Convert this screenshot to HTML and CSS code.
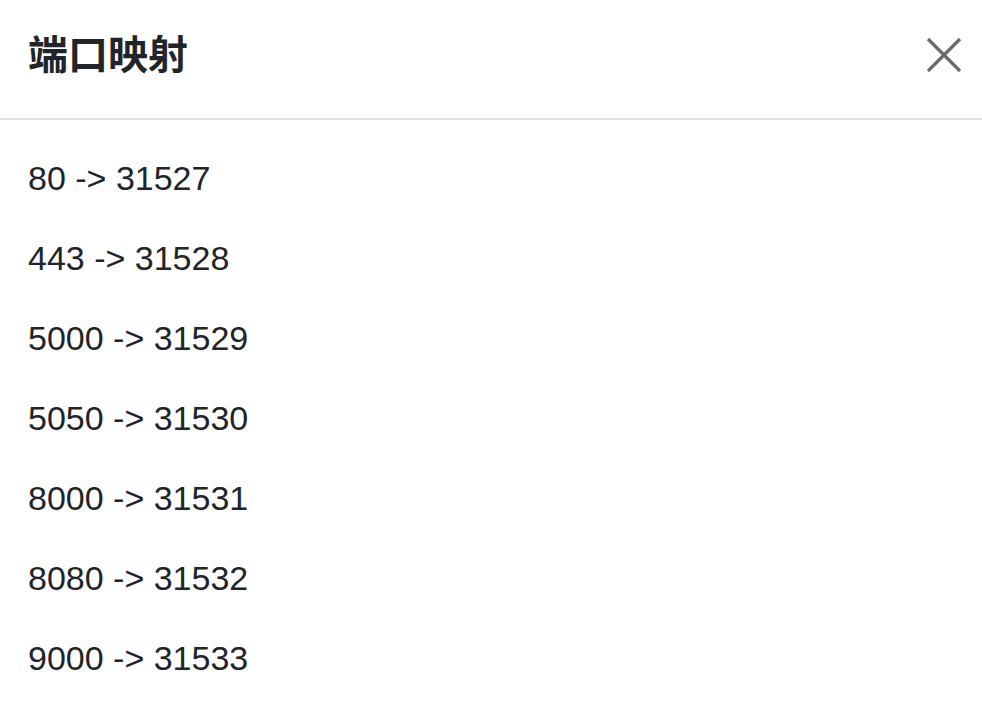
FILE: index.html
```html
<!DOCTYPE html>
<html lang="zh-CN">
<head>
	<meta charset="UTF-8">
	<title>端口映射</title>
	<link rel="stylesheet" href="styles.css">
</head>
<body>
	<div class="modal">
		<div class="modal-header">
			<h5 class="modal-title">端口映射</h5>
			<button class="btn-close" type="button" aria-label="Close">
				<svg width="36" height="36" viewBox="0 0 36 36">
					<path d="M2 2 L34 34 M34 2 L2 34" stroke="#6c6c6c" stroke-width="3.2" fill="none"/>
				</svg>
			</button>
		</div>
		<div class="modal-body">
			<p>80 -&gt; 31527</p>
			<p>443 -&gt; 31528</p>
			<p>5000 -&gt; 31529</p>
			<p>5050 -&gt; 31530</p>
			<p>8000 -&gt; 31531</p>
			<p>8080 -&gt; 31532</p>
			<p>9000 -&gt; 31533</p>
		</div>
	</div>
</body>
</html>
```

FILE: styles.css
```css
body{
	margin:0;
	background:#fff;
	color:#212529;
	font-family:"Liberation Sans","Noto Sans CJK SC",sans-serif;
}
.modal-header{
	height:120px;
	box-sizing:border-box;
	display:flex;
	align-items:center;
	justify-content:space-between;
	padding:0 20px 0 28px;
	border-bottom:2px solid #dee2e6;
}
.modal-title{
	margin:0 0 14px;
	font-family:"Noto Sans CJK SC",sans-serif;
	font-size:40px;
	font-weight:bold;
	line-height:48px;
	color:#212529;
}
.btn-close{
	border:0;
	background:none;
	padding:0;
	width:36px;
	height:36px;
	margin-bottom:8px;
	cursor:pointer;
}
.btn-close svg{
	display:block;
}
.modal-body{
	padding:34px 28px;
}
.modal-body p{
	margin:0 0 32px;
	font-size:34px;
	line-height:48px;
}
```
